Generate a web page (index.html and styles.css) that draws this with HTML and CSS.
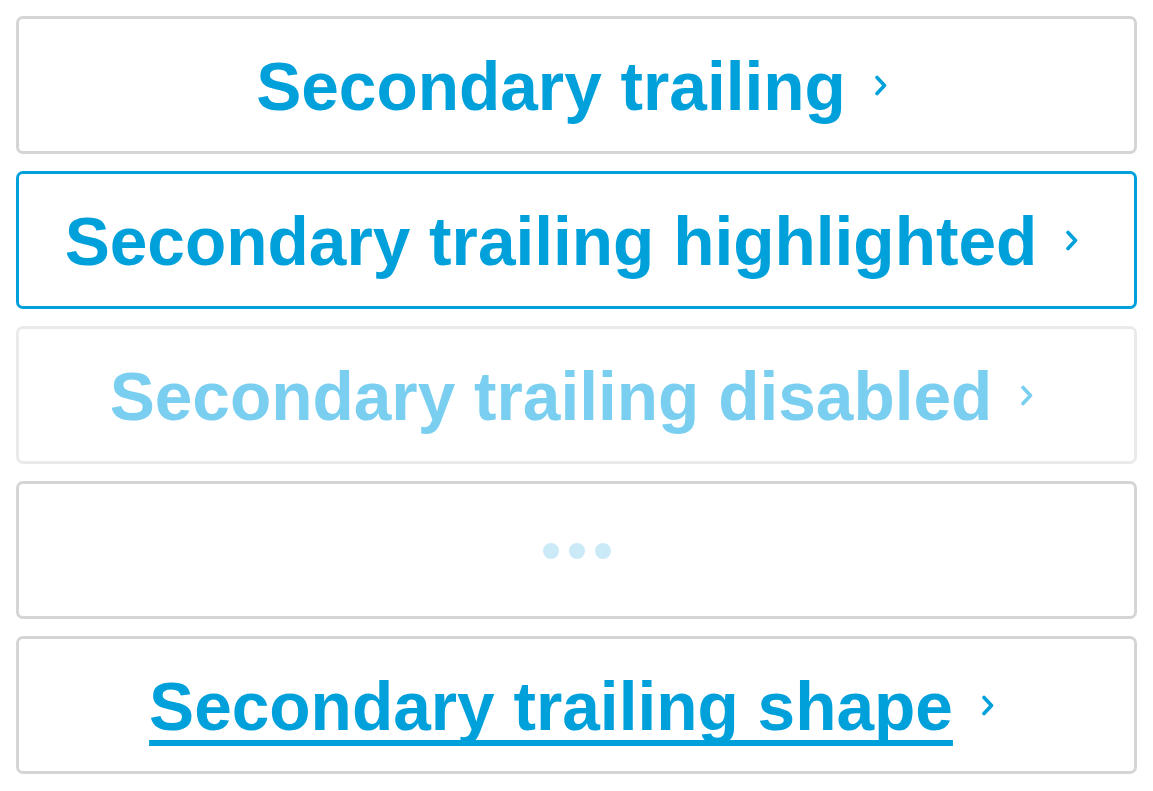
FILE: index.html
```html
<!DOCTYPE html>
<html lang="en">
<head>
<meta charset="utf-8">
<title>Secondary trailing buttons</title>
<link rel="stylesheet" href="styles.css">
</head>
<body>
<main class="stack">
  <button class="btn">
    <span class="label">Secondary trailing</span>
    <svg class="chev" viewBox="0 0 12 21" width="12" height="21" aria-hidden="true"><path d="M2 2.5 L9.5 10.5 L2 18.5" /></svg>
  </button>
  <button class="btn btn--highlighted">
    <span class="label">Secondary trailing highlighted</span>
    <svg class="chev" viewBox="0 0 12 21" width="12" height="21" aria-hidden="true"><path d="M2 2.5 L9.5 10.5 L2 18.5" /></svg>
  </button>
  <button class="btn btn--disabled" disabled>
    <span class="label">Secondary trailing disabled</span>
    <svg class="chev" viewBox="0 0 12 21" width="12" height="21" aria-hidden="true"><path d="M2 2.5 L9.5 10.5 L2 18.5" /></svg>
  </button>
  <button class="btn btn--loading" aria-label="Loading">
    <span class="dots"><span class="dot"></span><span class="dot"></span><span class="dot"></span></span>
  </button>
  <button class="btn btn--shape">
    <span class="label">Secondary trailing shape</span>
    <svg class="chev" viewBox="0 0 12 21" width="12" height="21" aria-hidden="true"><path d="M2 2.5 L9.5 10.5 L2 18.5" /></svg>
  </button>
</main>
</body>
</html>
```
FILE: styles.css
```css
html, body {
  margin: 0;
  padding: 0;
  background: #ffffff;
}

.stack {
  display: flex;
  flex-direction: column;
  gap: 17px;
  padding: 16px 16px 0 16px;
}

.btn {
  box-sizing: border-box;
  height: 138px;
  width: 100%;
  display: flex;
  align-items: center;
  justify-content: center;
  gap: 29px;
  background: #ffffff;
  border: 3px solid #d5d5d5;
  border-radius: 7px;
  color: #00a0db;
  font-family: "Liberation Sans", Arial, sans-serif;
  font-weight: 700;
  font-size: 67.6px;
  padding: 0;
  margin: 0;
  cursor: pointer;
}

.label {
  line-height: 1;
  white-space: nowrap;
  padding-top: 3px;
}

.chev {
  flex: none;
  margin-right: 10px;
  fill: none;
  stroke: currentColor;
  stroke-width: 3.6;
  stroke-linecap: round;
  stroke-linejoin: round;
}

.btn--highlighted {
  border-color: #00a0db;
}

.btn--disabled {
  border-color: #e9eaeb;
  color: #7acff1;
  cursor: default;
}

.btn--loading .dots {
  display: flex;
  gap: 10px;
  padding-top: 2px;
}

.dot {
  width: 16px;
  height: 16px;
  border-radius: 50%;
  background: #cbeaf7;
}

.btn--shape .label {
  text-decoration: underline;
  text-decoration-thickness: 6px;
  text-underline-offset: 10px;
  text-decoration-skip-ink: none;
}
```
